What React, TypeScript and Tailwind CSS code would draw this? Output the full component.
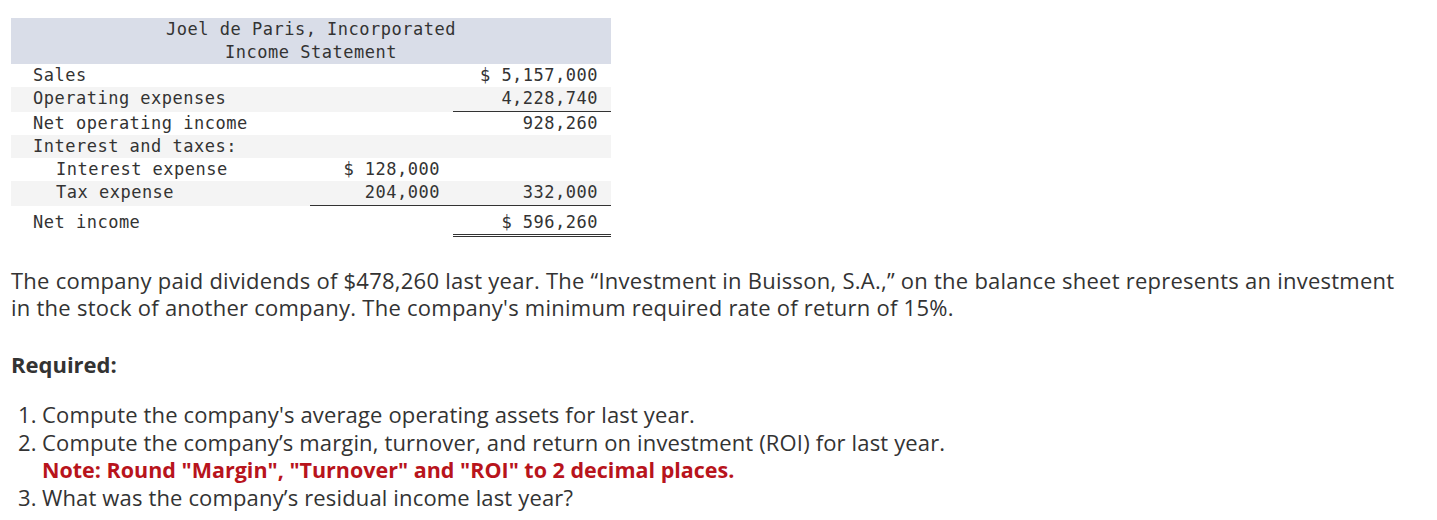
const mono = "font-['DejaVu_Sans_Mono',monospace] text-[17px] tracking-[0.5px] text-[#333]";

type Row = {
  label: string;
  indent?: boolean;
  mid?: string;
  right?: string;
  shaded?: boolean;
  midLine?: boolean;
  rightLine?: boolean;
  doubleLine?: boolean;
  tall?: boolean;
};

const rows: Row[] = [
  { label: 'Sales', right: '$ 5,157,000' },
  { label: 'Operating expenses', right: '4,228,740', shaded: true, rightLine: true },
  { label: 'Net operating income', right: '928,260' },
  { label: 'Interest and taxes:', shaded: true },
  { label: 'Interest expense', indent: true, mid: '$ 128,000' },
  { label: 'Tax expense', indent: true, mid: '204,000', right: '332,000', shaded: true, midLine: true, rightLine: true },
  { label: 'Net income', right: '$ 596,260', doubleLine: true, tall: true },
];

function IncomeStatement() {
  return (
    <div className={`w-[600px] ${mono}`}>
      <div className="bg-[#d9dde8] text-center leading-[23px]">
        <div>Joel de Paris, Incorporated</div>
        <div>Income Statement</div>
      </div>
      {rows.map((r) => (
        <div
          key={r.label}
          className={`flex leading-[23.3px] ${r.shaded ? 'bg-[#f4f4f4]' : ''} ${r.tall ? 'pt-[5px] pb-[4px]' : ''}`}
        >
          <div className={`w-[299px] ${r.indent ? 'pl-[45px]' : 'pl-[22px]'}`}>{r.label}</div>
          <div className={`w-[143px] pr-[13px] text-right ${r.midLine ? 'border-b border-[#333]' : ''}`}>
            {r.mid ?? '\u00a0'}
          </div>
          <div
            className={`w-[158px] pr-[13px] text-right ${r.rightLine ? 'border-b border-[#333]' : ''} ${
              r.doubleLine ? 'border-b-[3px] border-double border-[#333]' : ''
            }`}
          >
            {r.right ?? '\u00a0'}
          </div>
        </div>
      ))}
    </div>
  );
}

export default function App() {
  return (
    <div className="min-h-[520px] bg-white pl-[11px] pt-[18px] font-['Open_Sans',sans-serif] text-[#333]">
      <IncomeStatement />

      <p className="mt-[26px] w-[1400px] text-[22px] leading-[27px] tracking-[0.25px]">
        The company paid dividends of $478,260 last year. The “Investment in Buisson, S.A.,” on the balance sheet
        represents an investment in the stock of another company. The company's minimum required rate of return of 15%.
      </p>

      <p className="mt-[30px] text-[22px] font-bold leading-[27px]">Required:</p>

      <ol className="mt-[23px] text-[22px] leading-[27.5px] tracking-[0.15px]">
        <li className="flex">
          <span className="w-[31px] pl-[7px]">1.</span>
          <span>Compute the company's average operating assets for last year.</span>
        </li>
        <li className="flex">
          <span className="w-[31px] pl-[7px]">2.</span>
          <span>
            Compute the company’s margin, turnover, and return on investment (ROI) for last year.
            <br />
            <b className="text-[21.5px] tracking-normal text-[#b8141c]">
              Note: Round "Margin", "Turnover" and "ROI" to 2 decimal places.
            </b>
          </span>
        </li>
        <li className="flex">
          <span className="w-[31px] pl-[7px]">3.</span>
          <span>What was the company’s residual income last year?</span>
        </li>
      </ol>
    </div>
  );
}
